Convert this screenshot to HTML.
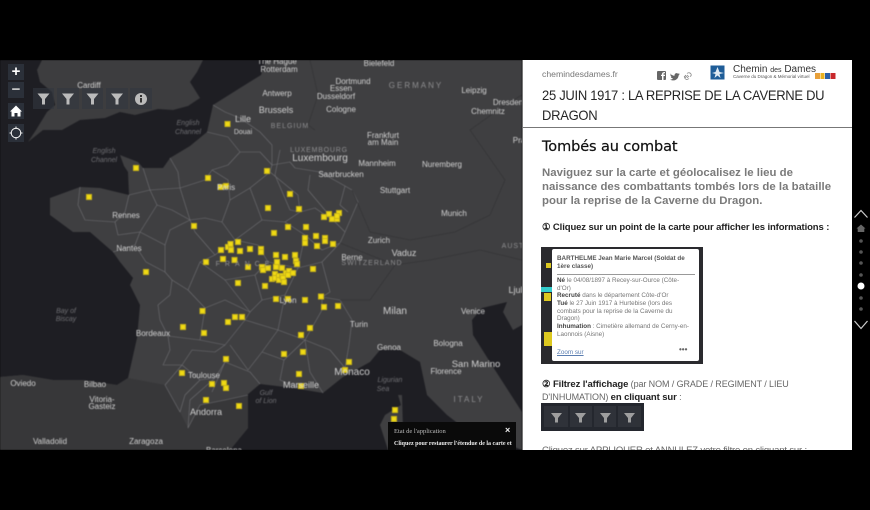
<!DOCTYPE html>
<html><head><meta charset="utf-8"><style>
html,body{margin:0;padding:0;background:#000;}
body{width:870px;height:510px;overflow:hidden;position:relative;font-family:"Liberation Sans",sans-serif;}
#map{position:absolute;left:0;top:60px;width:522px;height:390px;overflow:hidden;}
#panel{position:absolute;left:522px;top:60px;width:330px;height:390px;background:#fff;overflow:hidden;border-left:1px solid #777;box-sizing:border-box;}
.t{position:absolute;white-space:nowrap;}
.btn{position:absolute;background:rgba(44,50,60,.9);}
</style></head><body>
<div id="map">
<svg width="522" height="390" viewBox="0 60 522 390" style="display:block;filter:blur(.4px)">
<rect x="0" y="60" width="522" height="390" fill="#1e1e23"/>
<path d="M37 70 L42 60 L203 60 L197 72 L190 82 L200 98 L188 106 L173 110 L158 109 L135 115 L120 112 L105 118 L80 120 L62 130 L43 130 L28 142 L36 130 L47 112 L55 105 L52 92 L40 82 Z" fill="#3d3d3f"/>
<path d="M266 60 L261 75 L240 88 L213 105 L207 132 L190 146 L170 158 L163 168 L143 168 L138 162 L120 155 L124 166 L128 172 L129 195 L100 188 L80 187 L50 198 L50 215 L73 232 L90 232 L113 252 L120 262 L133 278 L130 285 L140 305 L137 338 L128 378 L117 385 L83 380 L53 380 L23 375 L0 377 L0 450 L230 450 L248 428 L247 395 L260 384 L293 388 L323 393 L343 377 L370 362 L380 350 L400 350 L420 362 L427 395 L447 415 L460 425 L522 450 L522 60 Z" fill="#3f3f41"/>
<path d="M0 377 L23 375 L53 380 L83 380 L117 385 L128 378 L165 385 L180 412 L188 428 L200 405 L225 400 L248 395 L248 428 L230 450 L0 450 Z" fill="#373739"/>
<path d="M482 308 L507 302 L503 312 L513 330 L522 325 L522 412 L495 370 L473 335 L472 320 Z" fill="#1e1e23"/>
<path d="M398 395 L401 405 L385 415 L380 425 L388 450 L420 450 L403 430 L402 395 Z" fill="#3f3f41"/>
<g fill="none" stroke="#6e6e72" stroke-width=".6" stroke-linejoin="round">
<path d="M213 105 L225 112 L240 118 L260 132 L272 145 L272 165 L290 162 L295 168 L320 172 L345 186 L352 190 L358 202 L345 232 L340 243 L322 262 L330 292 L322 297 L340 300 L352 320 L349 345 L345 368"/>
<path d="M207 132 L228 137 L240 152 L260 152 L272 165"/>
<path d="M170 158 L178 172 L180 188 L205 180 L212 170 L228 165 L240 152"/>
<path d="M212 170 L228 180 L230 200 L222 222 L205 218 L190 220 L180 188"/>
<path d="M143 168 L150 190 L180 188"/>
<path d="M129 195 L150 190 L157 205 L172 210 L190 220 L195 232 L215 255 L200 262 L188 290 L172 280 L170 295 L158 305 L160 320 L168 336 L170 350 L163 365 L182 365 L165 385"/>
<path d="M80 187 L78 205 L85 220 L115 222 L125 212 L129 195"/>
<path d="M115 222 L118 235 L140 232 L157 205"/>
<path d="M113 252 L135 245 L140 232 L165 245 L170 230 L190 220"/>
<path d="M135 245 L146 262 L165 272 L165 245"/>
<path d="M165 272 L172 280"/>
<path d="M230 200 L250 188 L270 172 L272 165"/>
<path d="M250 188 L262 220 L285 222 L300 212 L298 195 L270 172"/>
<path d="M222 222 L235 240 L262 220"/>
<path d="M215 255 L235 240 L258 245 L268 262 L298 268 L305 235 L285 222"/>
<path d="M300 212 L315 208 L335 222 L345 232"/>
<path d="M305 235 L322 250 L340 243"/>
<path d="M298 268 L322 262"/>
<path d="M200 262 L225 280 L255 275 L268 262"/>
<path d="M255 275 L262 300 L250 312 L225 280"/>
<path d="M262 300 L285 295 L298 268"/>
<path d="M285 295 L278 330 L305 340 L322 310 L322 297"/>
<path d="M188 290 L205 308 L225 300 L250 312"/>
<path d="M205 308 L200 340 L168 336"/>
<path d="M200 340 L225 345 L245 320 L250 312"/>
<path d="M225 345 L215 352 L192 350 L182 365"/>
<path d="M245 320 L278 330 L262 352 L248 370 L230 345"/>
<path d="M262 352 L284 360 L305 340 L330 350 L345 368"/>
<path d="M284 360 L280 380 L300 388"/>
<path d="M305 340 L310 372 L323 393"/>
<path d="M182 365 L200 380 L215 378 L225 362 L250 372 L260 384"/>
<path d="M200 380 L185 395 L180 412 L165 385"/>
<path d="M215 378 L190 400 L188 428 L200 405 L225 400 L248 395"/>
<path d="M225 362 L212 392"/>
<path d="M280 150 L275 175 L290 210 L300 212"/>
<path d="M310 175 L308 190 L335 222"/>
<path d="M345 186 L340 205 L348 212"/>
</g>
<g fill="none" stroke="#353537" stroke-width=".8">
<path d="M310 60 L318 95 L308 125 L315 130"/>
<path d="M352 190 L370 232 L410 240 L455 232 L490 215 L505 180 L470 130 L505 105 L522 95"/>
<path d="M340 243 L395 265 L430 260 L480 250 L522 260"/>
<path d="M395 265 L370 300 L340 300"/>
</g>
<g id="dots" fill="#f0da14" stroke="#c8b418" stroke-width="1">
<rect x="225" y="121.500" width="5" height="5"/><rect x="133.500" y="165.500" width="5" height="5"/><rect x="86.500" y="194.500" width="5" height="5"/><rect x="205.500" y="175.500" width="5" height="5"/><rect x="223.500" y="183.500" width="5" height="5"/><rect x="218" y="184.500" width="5" height="5"/><rect x="191.500" y="223.500" width="5" height="5"/>
<rect x="264.500" y="168.500" width="5" height="5"/><rect x="287.500" y="191.500" width="5" height="5"/><rect x="265.500" y="205.500" width="5" height="5"/><rect x="296.500" y="206.500" width="5" height="5"/><rect x="271.500" y="230.500" width="5" height="5"/><rect x="285.500" y="224.500" width="5" height="5"/><rect x="303.500" y="224.500" width="5" height="5"/>
<rect x="218.500" y="247.500" width="5" height="5"/><rect x="225.500" y="244.500" width="5" height="5"/><rect x="228" y="241.500" width="5" height="5"/><rect x="235.500" y="239.500" width="5" height="5"/><rect x="228.500" y="247.500" width="5" height="5"/><rect x="237.500" y="248.500" width="5" height="5"/><rect x="247.500" y="246.500" width="5" height="5"/><rect x="258.500" y="246.500" width="5" height="5"/><rect x="258.500" y="249.500" width="5" height="5"/><rect x="203.500" y="259.500" width="5" height="5"/><rect x="220.500" y="256.500" width="5" height="5"/><rect x="232" y="257.500" width="5" height="5"/><rect x="245.500" y="264.500" width="5" height="5"/><rect x="259.500" y="264.500" width="5" height="5"/><rect x="260.500" y="267.500" width="5" height="5"/><rect x="265.500" y="265.500" width="5" height="5"/><rect x="273.500" y="252.500" width="5" height="5"/><rect x="282.500" y="254.500" width="5" height="5"/><rect x="292.500" y="252.500" width="5" height="5"/><rect x="274.500" y="259.500" width="5" height="5"/><rect x="273.500" y="264.500" width="5" height="5"/><rect x="279.500" y="265.500" width="5" height="5"/><rect x="293.500" y="258.500" width="5" height="5"/><rect x="294.500" y="261.500" width="5" height="5"/>
<rect x="302.500" y="235.500" width="5" height="5"/><rect x="302.500" y="240.500" width="5" height="5"/><rect x="313.500" y="233.500" width="5" height="5"/><rect x="314.500" y="243.500" width="5" height="5"/><rect x="322.500" y="235.500" width="5" height="5"/><rect x="322.500" y="238.500" width="5" height="5"/><rect x="330.500" y="241.500" width="5" height="5"/><rect x="321.500" y="214.500" width="5" height="5"/><rect x="326.500" y="211.500" width="5" height="5"/><rect x="329.500" y="216.500" width="5" height="5"/><rect x="334.500" y="216.500" width="5" height="5"/><rect x="336.500" y="210.500" width="5" height="5"/><rect x="334.500" y="213.500" width="5" height="5"/>
<rect x="272.500" y="271.500" width="5" height="5"/><rect x="269.500" y="276.500" width="5" height="5"/><rect x="272.500" y="275.500" width="5" height="5"/><rect x="276.500" y="273.500" width="5" height="5"/><rect x="276.500" y="277.500" width="5" height="5"/><rect x="279.500" y="273.500" width="5" height="5"/><rect x="280.500" y="275.500" width="5" height="5"/><rect x="281.500" y="279.500" width="5" height="5"/><rect x="283.500" y="270.500" width="5" height="5"/><rect x="286.500" y="268.500" width="5" height="5"/><rect x="290.500" y="270.500" width="5" height="5"/><rect x="285.500" y="272.500" width="5" height="5"/>
<rect x="262.500" y="283.500" width="5" height="5"/><rect x="235.500" y="280.500" width="5" height="5"/><rect x="273.500" y="296.500" width="5" height="5"/><rect x="285.500" y="296.500" width="5" height="5"/><rect x="302.500" y="297.500" width="5" height="5"/><rect x="318.500" y="294" width="5" height="5"/><rect x="321.500" y="304.500" width="5" height="5"/><rect x="335.500" y="303.500" width="5" height="5"/><rect x="310.500" y="266.500" width="5" height="5"/>
<rect x="143.500" y="269.500" width="5" height="5"/><rect x="200" y="308.500" width="5" height="5"/><rect x="232.500" y="314.500" width="5" height="5"/><rect x="239.500" y="314.500" width="5" height="5"/><rect x="225.500" y="319.500" width="5" height="5"/><rect x="180.500" y="324.500" width="5" height="5"/><rect x="201.500" y="330.500" width="5" height="5"/><rect x="223.500" y="356.500" width="5" height="5"/><rect x="179.500" y="370.500" width="5" height="5"/><rect x="209.500" y="381.500" width="5" height="5"/><rect x="221.500" y="380.500" width="5" height="5"/><rect x="223.500" y="385.500" width="5" height="5"/><rect x="203.500" y="397.500" width="5" height="5"/><rect x="236.500" y="403.500" width="5" height="5"/>
<rect x="307.500" y="325.500" width="5" height="5"/><rect x="298.500" y="332.500" width="5" height="5"/><rect x="300.500" y="349.500" width="5" height="5"/><rect x="281.500" y="351.500" width="5" height="5"/><rect x="346.500" y="359.500" width="5" height="5"/><rect x="342.500" y="367.500" width="5" height="5"/><rect x="296.500" y="371.500" width="5" height="5"/><rect x="298.500" y="383.500" width="5" height="5"/><rect x="392.500" y="407.500" width="5" height="5"/><rect x="391.500" y="416.500" width="5" height="5"/>
</g>
<g font-family="'Liberation Sans',sans-serif" font-size="8" fill="#d2d2d2" text-anchor="middle">
<text x="89" y="88">Cardiff</text><text x="23" y="386">Oviedo</text><text x="95" y="387">Bilbao</text><text x="102" y="402">Vitoria-</text><text x="102" y="409">Gasteiz</text><text x="50" y="444">Valladolid</text><text x="146" y="444">Zaragoza</text><text x="224" y="453">Barcelona</text><text x="206" y="415" font-size="9">Andorra</text><text x="204" y="378">Toulouse</text><text x="153" y="336">Bordeaux</text><text x="129" y="251">Nantes</text><text x="126" y="218">Rennes</text><text x="226" y="190">Paris</text><text x="243" y="122" font-size="9">Lille</text><text x="243" y="134" font-size="7">Douai</text><text x="276" y="113" font-size="9">Brussels</text><text x="277" y="96">Antwerp</text><text x="279" y="72">Rotterdam</text><text x="277" y="64">The Hague</text><text x="353" y="84">Dortmund</text><text x="341" y="91">Essen</text><text x="336" y="99">Dusseldorf</text><text x="341" y="112">Cologne</text><text x="379" y="66">Bielefeld</text><text x="474" y="93">Leipzig</text><text x="508" y="105">Dresden</text><text x="488" y="114">Chemnitz</text><text x="519" y="143">Pra</text><text x="320" y="161" font-size="10">Luxembourg</text><text x="383" y="138">Frankfurt</text><text x="383" y="145">am Main</text><text x="377" y="166">Mannheim</text><text x="442" y="167">Nuremberg</text><text x="341" y="177">Saarbrucken</text><text x="395" y="193">Stuttgart</text><text x="454" y="216">Munich</text><text x="379" y="243">Zurich</text><text x="404" y="256" font-size="9">Vaduz</text><text x="352" y="260">Berne</text><text x="517" y="293" font-size="9">Ljub</text><text x="395" y="314" font-size="10">Milan</text><text x="473" y="314">Venice</text><text x="359" y="327">Turin</text><text x="288" y="303">Lyon</text><text x="389" y="350">Genoa</text><text x="448" y="346">Bologna</text><text x="476" y="367" font-size="9.500">San Marino</text><text x="446" y="374">Florence</text><text x="352" y="375" font-size="10">Monaco</text><text x="301" y="388" font-size="9">Marseille</text>
<g fill="#8e8e90" font-size="7"><text x="416" y="88" font-size="8" letter-spacing="2">GERMANY</text><text x="290" y="128" letter-spacing="1">BELGIUM</text><text x="319" y="152" letter-spacing=".8">LUXEMBOURG</text><text x="372" y="265" letter-spacing="1">SWITZERLAND</text><text x="513" y="248" letter-spacing="1">AUST</text><text x="469" y="402" font-size="8" letter-spacing="2">ITALY</text><text x="245" y="266" letter-spacing="5">FRANCE</text></g>
<g fill="#6e6e72" font-size="7" font-style="italic"><text x="188" y="125">English</text><text x="188" y="134">Channel</text><text x="104" y="153">English</text><text x="104" y="162">Channel</text><text x="66" y="313">Bay of</text><text x="66" y="321">Biscay</text><text x="390" y="382">Ligurian</text><text x="383" y="391">Sea</text><text x="266" y="395">Gulf</text><text x="266" y="403">of Lion</text></g>
</g>
</svg>
</div>
<div class="btn" style="left:8px;top:64px;width:16px;height:16px;color:#fff;font:bold 15px/16px 'Liberation Sans';text-align:center">+</div>
<div class="btn" style="left:8px;top:82px;width:16px;height:16px;color:#ccc;font:bold 15px/15px 'Liberation Sans';text-align:center">−</div>
<div class="btn" style="left:8px;top:103px;width:16px;height:16px"><svg width="16" height="16" viewBox="0 0 16 16"><path d="M8 2.500 L14 8.500 L12.500 8.500 L12.500 13.500 L9.500 13.500 L9.500 10 L6.500 10 L6.500 13.500 L3.500 13.500 L3.500 8.500 L2 8.500 Z" fill="#fff"/></svg></div>
<div class="btn" style="left:8px;top:124px;width:16px;height:18px"><svg width="16" height="18" viewBox="0 0 16 18"><circle cx="8" cy="9" r="4.800" fill="none" stroke="#eee" stroke-width="1"/><path d="M8 2.500V5M8 13V15.500M1.500 9H4M12 9H14.500" stroke="#eee"/></svg></div>
<div class="btn" style="left:33px;top:88px;width:21px;height:21px;background:rgba(50,55,64,.6)"><svg width="21" height="21"><path d="M4.500 5.500H16.500L12 11V16.500H9V11Z" fill="#bbb"/></svg></div>
<div class="btn" style="left:57px;top:88px;width:22px;height:21px;background:rgba(50,55,64,.6)"><svg width="22" height="21"><path d="M5 5.500H17L12.500 11V16.500H9.500V11Z" fill="#bbb"/></svg></div>
<div class="btn" style="left:82px;top:88px;width:21px;height:21px;background:rgba(50,55,64,.6)"><svg width="21" height="21"><path d="M4.500 5.500H16.500L12 11V16.500H9V11Z" fill="#bbb"/></svg></div>
<div class="btn" style="left:106px;top:88px;width:22px;height:21px;background:rgba(50,55,64,.6)"><svg width="22" height="21"><path d="M5 5.500H17L12.500 11V16.500H9.500V11Z" fill="#bbb"/></svg></div>
<div class="btn" style="left:130px;top:88px;width:22px;height:21px;background:rgba(50,55,64,.6)"><svg width="22" height="21"><circle cx="11" cy="11" r="6" fill="#bbb"/><rect x="10" y="10" width="2" height="4.500" fill="#333"/><rect x="10" y="7" width="2" height="2" fill="#333"/></svg></div>
<div style="position:absolute;left:388px;top:422px;width:128px;height:28px;background:#0a0a0a;color:#ddd;font-family:'Liberation Serif',serif;overflow:hidden">
<div class="t" style="left:6px;top:6px;font-size:6.500px;color:#bbb">Etat de l'application</div>
<div class="t" style="left:6px;top:19px;font-size:6px;font-weight:bold;color:#eee">Cliquez pour restaurer l'étendue de la carte et</div>
<div class="t" style="left:117px;top:3px;font:bold 9px 'Liberation Sans';color:#eee">×</div>
</div>
<div id="panel" style="filter:blur(.25px)">
<div class="t" style="left:19px;top:9px;font-size:8.700px;color:#777">chemindesdames.fr</div>
<svg class="t" style="left:133px;top:9px" width="40" height="12"><rect x="1" y="2" width="9" height="9" rx="1" fill="#666"/><path d="M7.500 11V7H9V5.700H7.500V5C7.500 4.500 7.800 4.300 9 4.300V3C7 3 6 3.600 6 5V5.700H5V7H6V11Z" fill="#fff"/><path d="M14 4.500C15.500 6 17 6.700 18.500 6.700C18.300 4.500 20.500 3.500 22 4.700L23.500 4.200L22.800 5.500L23.800 5.300C23.300 6 22.800 6.400 22.500 6.700C22.500 10 18 13 14 10.500C15.500 10.500 16.500 10.200 17 9.500C15.700 9.300 15 8.700 14.800 7.800H15.800C14.800 7.300 14.300 6.500 14.400 5.700L15.300 6C14.500 5.500 14 5.200 14 4.500Z" fill="#666"/><path d="M29 9L32 6M28 8L30 6M33 7L31 9M31 4.500C32.500 3 34.500 4 35 5C35.500 6 35 7 34 7.500M33 9.500C31.500 11 29.500 10.500 29 9.500C28 8 29 7 30 6.500" stroke="#888" stroke-width=".8" fill="none"/></svg>
<svg class="t" style="left:187px;top:5px" width="16" height="15"><rect x=".5" y=".5" width="14" height="14" fill="#1f5d98"/><path d="M7.500 2L9.500 7L14 8L9.500 9L10.500 13L7.500 10.500L4.500 13L5.500 9L2 8L5.500 7Z" fill="#dfe9f2"/></svg>
<div class="t" style="left:210px;top:4px;font-size:10px;line-height:12px;color:#333">Chemin <span style="font-size:7px">des</span> Dames</div>
<div class="t" style="left:210px;top:14px;font-size:4.500px;line-height:5px;color:#555">Caverne du Dragon &amp; Mémorial virtuel</div>
<svg class="t" style="left:292px;top:12px" width="24" height="8"><rect x="0" y="1" width="5" height="6" fill="#e8a03a"/><rect x="5.500" y="1" width="4" height="6" fill="#e8b020"/><rect x="10" y="1" width="5" height="6" fill="#2a5fa8"/><rect x="15.500" y="1" width="5" height="6" fill="#c8282c"/></svg>
<div class="t" style="left:19px;top:25px;font-size:14px;line-height:20px;color:#262626;letter-spacing:-.31px;transform:scaleX(.928);transform-origin:0 0">25 JUIN 1917 : LA REPRISE DE LA CAVERNE DU<br>DRAGON</div>
<div style="position:absolute;left:0;top:67px;width:329px;height:1px;background:#777"></div>
<div class="t" style="left:19px;top:77px;font:14.500px/20px 'DejaVu Sans',sans-serif;color:#111;letter-spacing:-.1px;-webkit-text-stroke:.2px #111">Tombés au combat</div>
<div class="t" style="left:19px;top:106px;font:bold 11.400px/14px 'Liberation Sans',sans-serif;color:#7a7a7a;letter-spacing:.02px">Naviguez sur la carte et géolocalisez le lieu de<br>naissance des combattants tombés lors de la bataille<br>pour la reprise de la Caverne du Dragon.</div>
<div class="t" style="left:19px;top:162px;font:bold 9.500px/12px 'Liberation Sans',sans-serif;color:#222;letter-spacing:-.11px">① Cliquez sur un point de la carte pour afficher les informations :</div>
<div style="position:absolute;left:18px;top:187px;width:162px;height:117px;background:#2a2a2e;overflow:hidden">
<div style="position:absolute;left:0;top:40px;width:11px;height:5px;background:#3cc"></div>
<div style="position:absolute;left:3px;top:46px;width:7px;height:8px;background:#dcc820"></div>
<div style="position:absolute;left:3px;top:85px;width:8px;height:14px;background:#dcc820"></div>
<div style="position:absolute;left:5px;top:16px;width:5px;height:5px;background:#dcc820"></div>
<div style="position:absolute;left:11px;top:2px;width:147px;height:112px;background:#fff;border-radius:2px">
<div class="t" style="left:5px;top:6px;font:bold 6.300px/8px 'Liberation Sans';color:#555">BARTHELME Jean Marie Marcel (Soldat de<br>1ère classe)</div>
<div style="position:absolute;left:5px;top:25px;width:138px;height:1px;background:#999"></div>
<div class="t" style="left:5px;top:28px;font:6.300px/7.650px 'Liberation Sans';color:#777"><b style="color:#444">Né</b> le 04/08/1897 à Recey-sur-Ource (Côte-<br>d'Or)<br><b style="color:#444">Recruté</b> dans le département Côte-d'Or<br><b style="color:#444">Tué</b> le 27 Juin 1917 à Hurtebise (lors des<br>combats pour la reprise de la Caverne du<br>Dragon)<br><b style="color:#444">Inhumation</b> : Cimetière allemand de Cerny-en-<br>Laonnois (Aisne)</div>
<div class="t" style="left:5px;top:100px;font:6.300px/8px 'Liberation Sans';color:#5a7db0;text-decoration:underline">Zoom sur</div>
<div class="t" style="left:127px;top:97px;font:bold 8px/8px 'Liberation Sans';color:#666">•••</div>
</div>
</div>
<div class="t" style="left:19px;top:318px;font:9px/13px 'Liberation Sans',sans-serif;color:#666;letter-spacing:-.1px"><b style="color:#222;font-size:9.500px">② Filtrez l'affichage</b> (par NOM / GRADE / REGIMENT / LIEU<br>D'INHUMATION) <b style="color:#222;font-size:9.500px">en cliquant sur</b> :</div>
<div style="position:absolute;left:18px;top:343px;width:103px;height:28px;background:#24272e">
<svg width="103" height="28"><g fill="#999"><path d="M10 10H21L17 15V19.500H14V15Z"/><path d="M34 10H45L41 15V19.500H38V15Z"/><path d="M59 10H70L66 15V19.500H63V15Z"/><path d="M83 10H94L90 15V19.500H87V15Z"/></g><g fill="#fff" opacity=".05"><rect x="3" y="3" width="24" height="21"/><rect x="29" y="3" width="22" height="21"/><rect x="53" y="3" width="22" height="21"/><rect x="77" y="3" width="23" height="21"/></g></svg>
</div>
<div class="t" style="left:19px;top:385px;font:9.500px/12px 'Liberation Sans',sans-serif;color:#666;letter-spacing:-.16px">Cliquez sur APPLIQUER et ANNULEZ votre filtre en cliquant sur :</div>
<div style="position:absolute;left:329px;top:0;width:1px;height:390px;background:#000"></div>
</div>
<svg class="t" style="left:852px;top:200px" width="18" height="140"><g fill="none" stroke="#ccc" stroke-width="1.200"><path d="M2.500 17.500L9 10.500L15.500 17.500"/><path d="M2.500 121L9 128.500L15.500 121"/></g><path d="M9 24.500L13.500 28.500H12.300V32H5.700V28.500H4.500Z" fill="#666"/><g fill="#555"><circle cx="9" cy="41" r="1.800"/><circle cx="9" cy="52" r="1.800"/><circle cx="9" cy="63" r="1.800"/><circle cx="9" cy="75" r="1.800"/><circle cx="9" cy="98" r="1.800"/><circle cx="9" cy="109" r="1.800"/></g><circle cx="9" cy="86" r="3.500" fill="#fff"/></svg>
</body></html>
